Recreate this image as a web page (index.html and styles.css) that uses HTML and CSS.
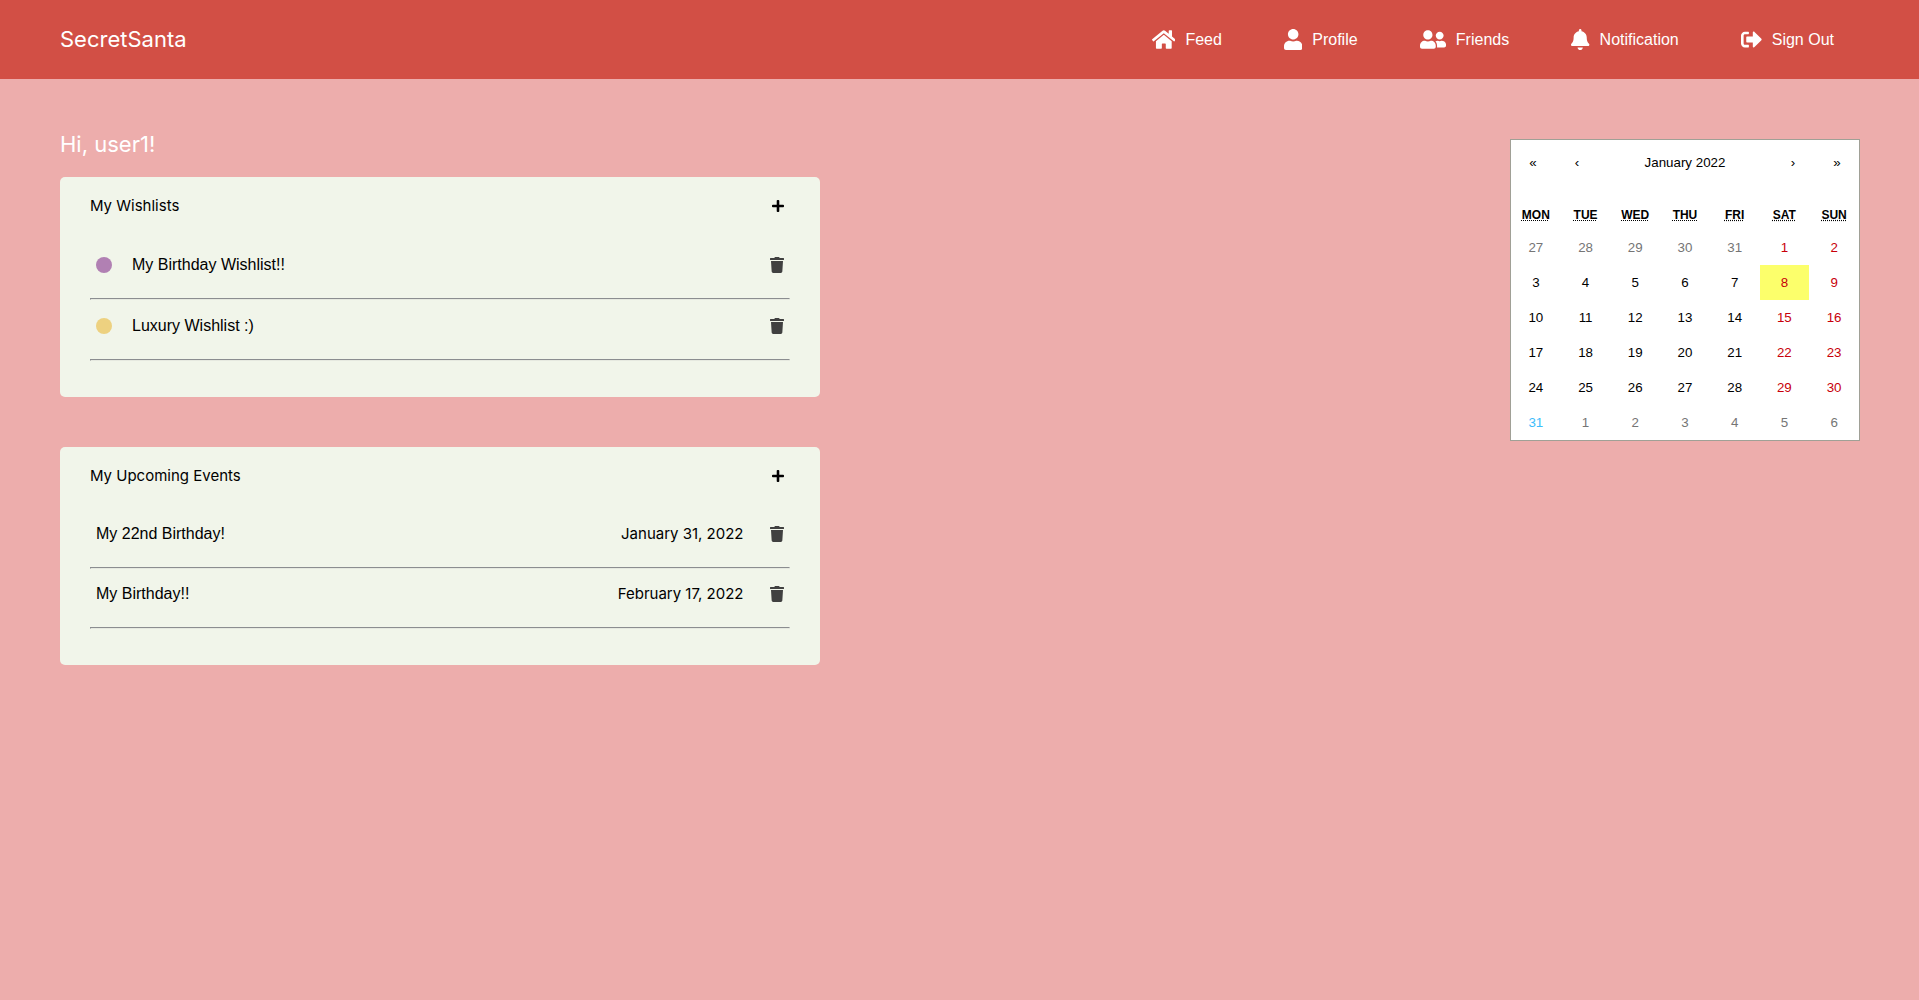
FILE: index.html
```
<!DOCTYPE html>
<html lang="en">

<head>
    <meta charset="UTF-8">
    <meta name="viewport" content="width=device-width, initial-scale=1.0">
    <title>SecretSanta</title>
    <link rel="stylesheet" href="styles.css">
</head>

<body>
    <!-- Navbar -->
    <header class="navbar">
        <a href="#" class="brand">SecretSanta</a>
        <nav class="nav-links">
            <a href="#feed">
                <svg viewBox="0 0 576 512"><path d="M280.37 148.26L96 300.11V464a16 16 0 0 0 16 16l112.06-.29a16 16 0 0 0 15.92-16V368a16 16 0 0 1 16-16h64a16 16 0 0 1 16 16v95.64a16 16 0 0 0 16 16.05L464 480a16 16 0 0 0 16-16V300L295.67 148.26a12.19 12.19 0 0 0-15.3 0zM571.6 251.47L488 182.56V44.05a12 12 0 0 0-12-12h-56a12 12 0 0 0-12 12v72.61L318.47 43a48 48 0 0 0-61 0L4.34 251.47a12 12 0 0 0-1.6 16.9l25.5 31A12 12 0 0 0 45.15 301l235.22-193.74a12.19 12.19 0 0 1 15.3 0L530.9 301a12 12 0 0 0 16.9-1.6l25.5-31a12 12 0 0 0-1.7-16.93z"/></svg>
                Feed
            </a>
            <a href="#profile">
                <svg viewBox="0 0 448 512"><path d="M224 256c70.7 0 128-57.3 128-128S294.7 0 224 0 96 57.3 96 128s57.3 128 128 128zm89.6 32h-16.7c-22.2 10.2-46.9 16-72.9 16s-50.6-5.8-72.9-16h-16.7C60.2 288 0 348.2 0 422.4V464c0 26.5 21.5 48 48 48h352c26.5 0 48-21.5 48-48v-41.6c0-74.2-60.2-134.4-134.4-134.4z"/></svg>
                Profile
            </a>
            <a href="#friends">
                <svg viewBox="0 0 640 512"><path d="M192 256c61.9 0 112-50.1 112-112S253.9 32 192 32 80 82.1 80 144s50.1 112 112 112zm76.8 32h-8.3c-20.8 10-43.9 16-68.5 16s-47.6-6-68.5-16h-8.3C51.6 288 0 339.6 0 403.2V432c0 26.5 21.5 48 48 48h288c26.5 0 48-21.5 48-48v-28.8c0-63.6-51.6-115.2-115.2-115.2zM480 256c53 0 96-43 96-96s-43-96-96-96-96 43-96 96 43 96 96 96zm48 32h-3.8c-13.9 4.8-28.6 8-44.2 8s-30.3-3.2-44.2-8H432c-20.4 0-39.2 5.9-55.7 15.4 24.4 26.3 39.7 61.2 39.7 99.8v38.4c0 2.2-.5 4.3-.6 6.4H592c26.5 0 48-21.5 48-48 0-61.9-50.1-112-112-112z"/></svg>
                Friends
            </a>
            <a href="#notification">
                <svg viewBox="0 0 448 512"><path d="M224 512c35.32 0 63.97-28.65 63.97-64H160.03c0 35.35 28.65 64 63.97 64zm215.39-149.71c-19.32-20.76-55.47-51.99-55.47-154.29 0-77.7-54.48-139.9-127.94-155.16V32c0-17.67-14.32-32-31.98-32s-31.98 14.33-31.98 32v20.84C118.56 68.1 64.08 130.3 64.08 208c0 102.3-36.15 133.53-55.47 154.29-6 6.45-8.66 14.16-8.61 21.71.11 16.4 12.98 32 32.1 32h383.8c19.12 0 32-15.6 32.1-32 .05-7.55-2.61-15.27-8.61-21.71z"/></svg>
                Notification
            </a>
            <a href="#signout">
                <svg viewBox="0 0 512 512"><path d="M497 273L329 441c-15 15-41 4.5-41-17v-96H152c-13.3 0-24-10.7-24-24v-96c0-13.3 10.7-24 24-24h136V88c0-21.4 25.9-32 41-17l168 168c9.3 9.4 9.3 24.6 0 34zM192 436v-40c0-6.6-5.4-12-12-12H96c-17.7 0-32-14.3-32-32V160c0-17.7 14.3-32 32-32h84c6.6 0 12-5.4 12-12V76c0-6.6-5.4-12-12-12H96c-53 0-96 43-96 96v192c0 53 43 96 96 96h84c6.6 0 12-5.4 12-12z"/></svg>
                Sign Out
            </a>
        </nav>
    </header>

    <!-- Shared icons -->
    <svg class="sprite">
        <symbol id="plus" viewBox="0 0 448 512"><path d="M416 208H272V64c0-17.67-14.33-32-32-32h-32c-17.67 0-32 14.33-32 32v144H32c-17.67 0-32 14.33-32 32v32c0 17.67 14.33 32 32 32h144v144c0 17.67 14.33 32 32 32h32c17.67 0 32-14.33 32-32V304h144c17.67 0 32-14.33 32-32v-32c0-17.67-14.33-32-32-32z"/></symbol>
        <symbol id="trash" viewBox="0 0 448 512"><path d="M432 32H312l-9.4-18.7A24 24 0 0 0 281.1 0H166.8a23.72 23.72 0 0 0-21.4 13.3L136 32H16A16 16 0 0 0 0 48v32a16 16 0 0 0 16 16h416a16 16 0 0 0 16-16V48a16 16 0 0 0-16-16zM53.2 467a48 48 0 0 0 47.9 45h245.8a48 48 0 0 0 47.9-45L416 128H32z"/></symbol>
    </svg>

    <main class="home">
        <div class="lists">
            <h1>Hi, user1!</h1>

            <!-- Wishlists -->
            <section class="card wishlists">
                <div class="card-header">
                    <h2>My Wishlists</h2>
                    <button class="add" aria-label="Add wishlist"><svg><use href="#plus"/></svg></button>
                </div>
                <div class="row">
                    <span class="dot purple"></span>
                    <a href="#" class="name">My Birthday Wishlist!!</a>
                    <button class="delete" aria-label="Delete"><svg><use href="#trash"/></svg></button>
                </div>
                <hr>
                <div class="row">
                    <span class="dot yellow"></span>
                    <a href="#" class="name">Luxury Wishlist :)</a>
                    <button class="delete" aria-label="Delete"><svg><use href="#trash"/></svg></button>
                </div>
                <hr>
            </section>

            <!-- Events -->
            <section class="card">
                <div class="card-header">
                    <h2>My Upcoming Events</h2>
                    <button class="add" aria-label="Add event"><svg><use href="#plus"/></svg></button>
                </div>
                <div class="row">
                    <a href="#" class="name">My 22nd Birthday!</a>
                    <span class="date">January 31, 2022</span>
                    <button class="delete" aria-label="Delete"><svg><use href="#trash"/></svg></button>
                </div>
                <hr>
                <div class="row">
                    <a href="#" class="name">My Birthday!!</a>
                    <span class="date">February 17, 2022</span>
                    <button class="delete" aria-label="Delete"><svg><use href="#trash"/></svg></button>
                </div>
                <hr>
            </section>
        </div>

        <!-- Calendar -->
        <div class="calendar">
            <div class="calendar-nav">
                <button class="arrow">«</button>
                <button class="arrow">‹</button>
                <button class="label">January 2022</button>
                <button class="arrow">›</button>
                <button class="arrow">»</button>
            </div>
            <table>
                <thead>
                    <tr>
                        <th><abbr title="Monday">MON</abbr></th>
                        <th><abbr title="Tuesday">TUE</abbr></th>
                        <th><abbr title="Wednesday">WED</abbr></th>
                        <th><abbr title="Thursday">THU</abbr></th>
                        <th><abbr title="Friday">FRI</abbr></th>
                        <th><abbr title="Saturday">SAT</abbr></th>
                        <th><abbr title="Sunday">SUN</abbr></th>
                    </tr>
                </thead>
                <tbody id="days"></tbody>
            </table>
        </div>
    </main>

    <script>
        const year = 2022;
        const month = 0;
        const today = 8;
        const eventDays = [31];
        const days = document.getElementById("days");

        // weeks start on monday
        const offset = (new Date(year, month, 1).getDay() + 6) % 7;

        for (let week = 0; week < 6; week++) {
            const row = days.insertRow();
            for (let day = 0; day < 7; day++) {
                const date = new Date(year, month, week * 7 + day - offset + 1);
                const button = document.createElement("button");
                button.innerText = date.getDate();
                if (date.getMonth() !== month) {
                    button.classList.add("neighbor");
                } else {
                    if (day > 4) button.classList.add("weekend");
                    if (date.getDate() === today) button.classList.add("today");
                    if (eventDays.includes(date.getDate())) button.classList.add("event");
                }
                row.insertCell().appendChild(button);
            }
        }
    </script>
</body>

</html>
```
FILE: styles.css
```
* {
    box-sizing: border-box;
}

body {
    margin: 0;
    min-height: 100vh;
    background-color: #edadac;
    font-family: "Liberation Sans", Arial, sans-serif;
    font-size: 16px;
    line-height: 18px;
    color: black;
}

a {
    color: inherit;
    text-decoration: none;
}

button {
    padding: 0;
    border: 0;
    background: none;
    font-family: inherit;
    color: inherit;
    cursor: pointer;
}

svg {
    display: block;
    fill: currentColor;
}

.sprite {
    display: none;
}

/* navbar */
.navbar {
    display: flex;
    justify-content: space-between;
    align-items: center;
    padding: 25px 85px 25px 60px;
    background-color: #d24f45;
    color: white;
}

.brand,
h1 {
    margin: 0;
    font-family: Inter, sans-serif;
    font-size: 22px;
    font-weight: 400;
    line-height: 29px;
}

.nav-links {
    display: flex;
    gap: 62px;
}

.nav-links a {
    display: flex;
    align-items: center;
    gap: 10px;
}

.nav-links svg {
    height: 21px;
}

/* content */
.home {
    display: grid;
    grid-template-columns: 11fr 10fr 350px;
    align-items: start;
    padding: 51px 59px 50px 60px;
}

h1 {
    margin-bottom: 18px;
    color: white;
}

.card {
    margin-bottom: 50px;
    padding: 20px 30px;
    padding-bottom: 28px;
    border-radius: 5px;
    background-color: #f1f5ea;
}

.card-header {
    display: flex;
    justify-content: space-between;
    align-items: center;
    margin-bottom: 32px;
    padding-right: 6px;
}

h2,
.date {
    margin: 0;
    font-family: Inter, sans-serif;
    font-size: 15px;
    font-weight: 400;
}

.add svg {
    width: 12px;
    height: 14px;
}

.row {
    display: flex;
    align-items: center;
    padding: 8px 6px 16px;
}

.wishlists .row {
    line-height: 19px;
}

.dot {
    width: 16px;
    height: 16px;
    margin-right: 20px;
    border-radius: 50%;
}

.purple {
    background-color: #b180b3;
}

.yellow {
    background-color: #edd180;
}

.name {
    flex: 1;
}

.delete {
    margin-left: 26px;
    color: #404040;
}

.delete svg {
    width: 14px;
    height: 16px;
}

hr {
    margin: 8px 0;
    border: 1px solid;
    border-color: #8b8d90 #e6e9e0 #e6e9e0 #8b8d90;
}

/* calendar */
.calendar {
    grid-column: 3;
    margin-top: 9px;
    border: 1px solid #a0a096;
    background-color: white;
}

.calendar-nav {
    display: flex;
    height: 44px;
    margin-bottom: 16px;
}

.arrow {
    width: 44px;
}

.label {
    flex: 1;
}

table {
    width: 100%;
    table-layout: fixed;
    border-collapse: collapse;
}

th {
    padding: 8px 0;
    font-size: 12px;
    line-height: 14px;
}

td {
    padding: 0;
}

td button {
    display: block;
    width: 100%;
    height: 35px;
}

.weekend {
    color: #c8000a;
}

.neighbor {
    color: #757575;
}

.today {
    background-color: #fcff6b;
}

.event {
    color: #3dbdfb;
}
```
